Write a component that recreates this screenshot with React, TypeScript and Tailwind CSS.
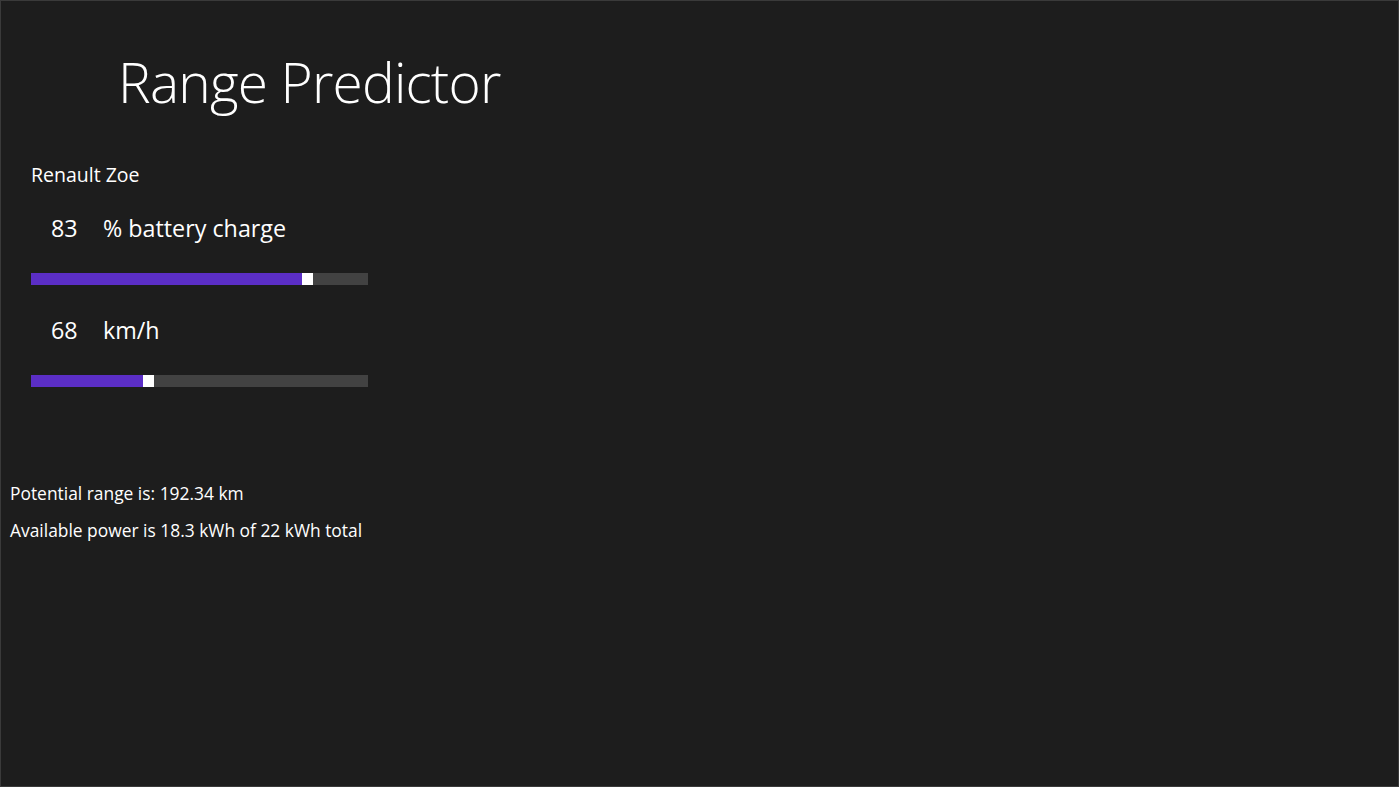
import React, { useState } from 'react'

const font = { fontFamily: '"Open Sans", "Noto Sans", sans-serif' }

function Track({ frac }: { frac: number }) {
  // filled part + white thumb, rest is the grey rail
  return (
    <div className="flex h-[12px] w-[337px] bg-[#424242]">
      <div className="h-full bg-[#5b2ec6]" style={{ width: `calc((100% - 11px) * ${frac})` }} />
      <div className="h-full w-[11px] bg-white" />
    </div>
  )
}

export default function App() {
  const [charge] = useState(83)
  const [speed] = useState(68)

  return (
    <div style={font} className="h-[787px] w-[1399px] border border-[#3a3a3a] bg-[#1d1d1d] text-white">
      <h1 className="pl-[117px] pt-[43px] text-[55px] font-light leading-[76px] tracking-[-0.8px]">Range Predictor</h1>

      <div className="pl-[30px] pt-[41px]">
        <div className="text-[19.5px] leading-[28px]">Renault Zoe</div>

        <div className="mt-[24px] flex items-center text-[23.3px] leading-[30px]">
          <span className="w-[72px] pl-[20px]">{charge}</span>
          <span>% battery charge</span>
        </div>
        <div className="mt-[30px]">
          <Track frac={charge / 100} />
        </div>

        <div className="mt-[30px] flex items-center text-[23.3px] leading-[30px]">
          <span className="w-[72px] pl-[20px]">{speed}</span>
          <span>km/h</span>
        </div>
        <div className="mt-[30px]">
          <Track frac={0.345} />
        </div>
      </div>

      <div className="pl-[9px] pt-[93px] text-[17.4px] leading-[26px]">
        <div>Potential range is: 192.34 km</div>
        <div className="mt-[11px]">Available power is 18.3 kWh of 22 kWh total</div>
      </div>
    </div>
  )
}
